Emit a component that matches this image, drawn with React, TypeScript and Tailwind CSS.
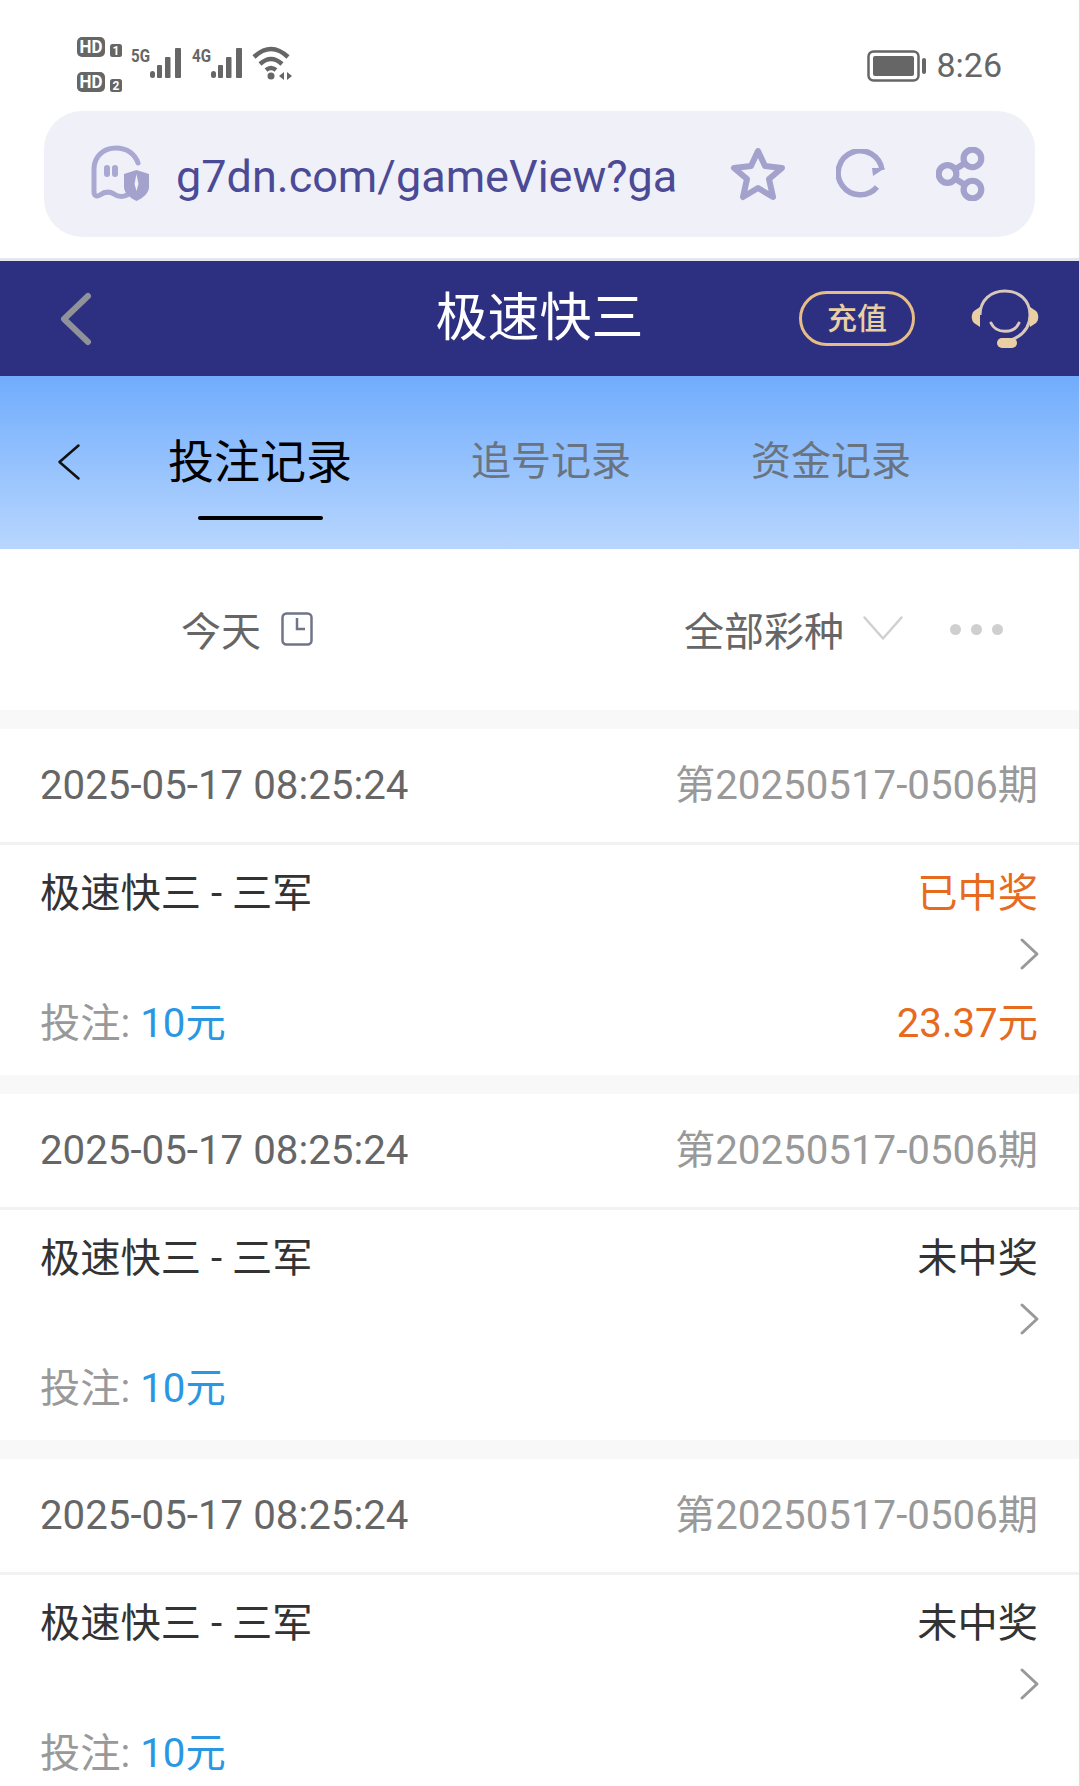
const fontStack = "font-['Roboto','Noto_Sans_CJK_SC',sans-serif]";

function StatusIcons() {
  return (
    <svg width="224" height="64" viewBox="0 0 224 64" fill="#666">
      <rect x="2" y="1" width="28" height="20" rx="5" />
      <text x="16" y="17" fill="#fff" fontSize="18" fontWeight="700" textAnchor="middle" textLength="23" lengthAdjust="spacingAndGlyphs" fontFamily="Roboto">HD</text>
      <rect x="35" y="8" width="12" height="13" rx="2.5" />
      <text x="41" y="19" fill="#fff" fontSize="12" fontWeight="700" textAnchor="middle" fontFamily="Roboto">1</text>
      <rect x="2" y="36" width="28" height="20" rx="5" />
      <text x="16" y="52" fill="#fff" fontSize="18" fontWeight="700" textAnchor="middle" textLength="23" lengthAdjust="spacingAndGlyphs" fontFamily="Roboto">HD</text>
      <rect x="35" y="43" width="12" height="13" rx="2.5" />
      <text x="41" y="54" fill="#fff" fontSize="12" fontWeight="700" textAnchor="middle" fontFamily="Roboto">2</text>

      <text x="56" y="26" fontSize="19" fontWeight="700" textLength="19" lengthAdjust="spacingAndGlyphs" fontFamily="Roboto">5G</text>
      <rect x="75" y="35" width="5" height="7" rx="2.5" />
      <rect x="82" y="29" width="5" height="13" rx="1" />
      <rect x="90" y="21" width="5.5" height="21" rx="1" />
      <rect x="100" y="12" width="6" height="30" rx="1" />

      <text x="117" y="26" fontSize="19" fontWeight="700" textLength="19" lengthAdjust="spacingAndGlyphs" fontFamily="Roboto">4G</text>
      <rect x="136" y="35" width="5" height="7" rx="2.5" />
      <rect x="143" y="29" width="5" height="13" rx="1" />
      <rect x="151" y="21" width="5.5" height="21" rx="1" />
      <rect x="161" y="12" width="6" height="30" rx="1" />

      <g fill="none" stroke="#666" strokeWidth="4.5">
        <path d="M179 21 Q196 5 213 21" />
        <path d="M185 28 Q196 18 207 28" />
        <path d="M191 34 Q196 30 201 34" />
      </g>
      <circle cx="196" cy="40" r="3.5" />
      <path d="M209 36v8l-5-4zM212 36v8l5-4z" />
    </svg>
  );
}

function Battery() {
  return (
    <svg width="60" height="32" viewBox="0 0 60 32">
      <rect x="1.5" y="1.5" width="50" height="29" rx="5" fill="none" stroke="#666" strokeWidth="2.5" />
      <rect x="6" y="6" width="41" height="20" rx="2" fill="#666" />
      <rect x="55" y="8" width="4" height="16" rx="2" fill="#666" />
    </svg>
  );
}

function GhostIcon() {
  return (
    <svg width="62" height="58" viewBox="0 0 62 58" fill="none">
      <path
        d="M5 47 V24 C5 11 15 3 27 3 C38 3 46 9 49 18 M5 47 C5 51 8 52 11 50 C15 47 20 46 25 49 C29 52 34 52 38 50"
        stroke="#a9a8d2"
        strokeWidth="5"
        strokeLinecap="round"
      />
      <rect x="15" y="20" width="6" height="12" rx="3" fill="#a9a8d2" />
      <rect x="23" y="20" width="6" height="12" rx="3" fill="#a9a8d2" />
      <path d="M47.5 25 L60 29 V42 C60 48 54 53 47.5 56 C41 53 35 48 35 42 V29 Z" fill="#a3a2cc" />
      <path d="M47.5 29 L49.5 39 L47.5 46 L45.5 39 Z" fill="#f0f0f8" />
    </svg>
  );
}

function StarIcon() {
  return (
    <svg width="56" height="54" viewBox="0 0 56 54" fill="none">
      <path
        d="M28 4 L35 19 L52 21 L39 32 L43 50 L28 41 L13 50 L17 32 L4 21 L21 19 Z"
        stroke="#a3a2cc"
        strokeWidth="6"
        strokeLinejoin="round"
      />
    </svg>
  );
}

function ReloadIcon() {
  return (
    <svg width="50" height="50" viewBox="0 0 50 50" fill="none">
      <path d="M41 38 A22 22 0 1 1 46 21" stroke="#a3a2cc" strokeWidth="5.5" />
      <path d="M49 19 L37 27 L36 19 Z" fill="#a3a2cc" />
    </svg>
  );
}

function ShareIcon() {
  return (
    <svg width="50" height="54" viewBox="0 0 48 52" fill="none" stroke="#a3a2cc" strokeWidth="6">
      <circle cx="35" cy="11" r="8.5" />
      <circle cx="11" cy="26" r="8.5" />
      <circle cx="35" cy="41" r="8.5" />
      <path d="M19 21 L27 16 M19 31 L27 36" />
    </svg>
  );
}

function Headset() {
  return (
    <svg width="68" height="60" viewBox="0 0 68 60" fill="none">
      <path d="M9 26 C9 11 20 2 34 2 C48 2 59 11 59 26 C59 38 52 47 38 52" stroke="#d8c8bc" strokeWidth="3" />
      <path d="M3 22 C0 25 0 31 3 34 L9 38 V18 Z" fill="#e9cfa3" />
      <path d="M65 22 C68 25 68 31 65 34 L59 38 V18 Z" fill="#e9cfa3" />
      <path d="M20 34 C25 45 43 45 48 34" stroke="#dcc8c0" strokeWidth="3" strokeLinecap="round" />
      <rect x="26" y="49" width="20" height="10" rx="5" fill="#e9cfa3" />
    </svg>
  );
}

function Chevron({ w, h, color, stroke, dir }: { w: number; h: number; color: string; stroke: number; dir: "left" | "right" | "down" }) {
  const d =
    dir === "left"
      ? `M${w - stroke} ${stroke} L${stroke} ${h / 2} L${w - stroke} ${h - stroke}`
      : dir === "right"
        ? `M${stroke} ${stroke} L${w - stroke} ${h / 2} L${stroke} ${h - stroke}`
        : `M${stroke} ${stroke} L${w / 2} ${h - stroke} L${w - stroke} ${stroke}`;
  return (
    <svg width={w} height={h} viewBox={`0 0 ${w} ${h}`} fill="none">
      <path d={d} stroke={color} strokeWidth={stroke} strokeLinecap="round" strokeLinejoin="round" />
    </svg>
  );
}

function ClockIcon() {
  return (
    <svg width="32" height="34" viewBox="0 0 32 34" fill="none" stroke="#6f7488" strokeWidth="2.5">
      <rect x="1.5" y="1.5" width="29" height="31" rx="4" />
      <path d="M16 6 V17 H24" />
    </svg>
  );
}

function RecordCard({ status, win }: { status: string; win?: string }) {
  return (
    <div className="bg-white">
      <div className="flex h-[113px] items-center justify-between pt-[2px] pr-[41px] pl-[40px]">
        <span className="text-[40.25px] text-[#666]">2025-05-17 08:25:24</span>
        <span className="text-[40.25px] text-[#999]">第20250517-0506期</span>
      </div>
      <div className="h-[3px] bg-[#f2f2f2]" />
      <div className="flex h-[230px] justify-between pt-[21px] pr-[41px] pb-[23px] pl-[40px]">
        <div className="flex flex-col justify-between">
          <div className="h-[56px] text-[40.25px] leading-[56px] text-[#333]">极速快三 - 三军</div>
          <div className="h-[56px] text-[40.25px] leading-[56px] text-[#999]">
            投注: <span className="text-[#2b97e3]">10元</span>
          </div>
        </div>
        <div className="flex flex-col items-end justify-between">
          <div className={`h-[56px] text-[40.25px] leading-[56px] ${win ? "text-[#e66b1f]" : "text-[#333]"}`}>{status}</div>
          <div className="mr-[-2px] mb-[10px]">
            <Chevron w={21} h={34} color="#999" stroke={3} dir="right" />
          </div>
          <div className="h-[56px] text-[40.25px] leading-[56px] text-[#e66b1f]">{win}</div>
        </div>
      </div>
    </div>
  );
}

export default function App() {
  return (
    <div className={`h-[1786px] w-[1080px] overflow-hidden border-r border-[#dcdcdc] bg-white ${fontStack}`}>
      {/* status bar */}
      <div className="flex h-[111px] items-center justify-between pt-[20px] pr-[77px] pl-[75px]">
        <div className="mt-[4px]">
          <StatusIcons />
        </div>
        <div className="flex items-center gap-[9px]">
          <Battery />
          <span className="text-[34px] text-[#666]">8:26</span>
        </div>
      </div>

      {/* url bar */}
      <div className="mr-[44px] ml-[44px] flex h-[126px] items-center rounded-[38px] bg-[#f0f0f8] pl-[45px]">
        <GhostIcon />
        <span className="mt-[6px] ml-[25px] w-[507px] overflow-hidden text-[45px] whitespace-nowrap text-[#4b4a96]">
          g7dn.com/gameView?ga
        </span>
        <div className="ml-[47px]">
          <StarIcon />
        </div>
        <div className="ml-[50px]">
          <ReloadIcon />
        </div>
        <div className="ml-[50px]">
          <ShareIcon />
        </div>
      </div>
      <div className="h-[24px] border-b-[3px] border-[#e4e8ee]" />

      {/* header */}
      <div className="flex h-[115px] items-center bg-[#2d3080] px-[40px]">
        <div className="flex flex-1">
          <div className="ml-[18px]">
            <Chevron w={36} h={58} color="#8f9399" stroke={6} dir="left" />
          </div>
        </div>
        <h1 className="text-[52px] text-white">极速快三</h1>
        <div className="flex flex-1 items-center justify-end gap-[56px]">
          <div className="flex h-[55px] w-[116px] items-center justify-center rounded-full border-[3px] border-[#e6bd86] text-[30px] font-medium text-[#e9cfa3]">
            充值
          </div>
          <Headset />
        </div>
      </div>

      {/* tabs */}
      <div className="flex h-[173px] items-start bg-gradient-to-b from-[#70acfc] to-[#b8d6fe] pt-[59px]">
        <div className="mt-[8px] ml-[57px] w-[111px]">
          <Chevron w={24} h={38} color="#111" stroke={2.5} dir="left" />
        </div>
        <div className="flex w-[184px] flex-col items-center">
          <span className="text-[46px] leading-[54px] whitespace-nowrap text-black">投注记录</span>
          <div className="mt-[27px] h-[4px] w-[125px] rounded-full bg-black" />
        </div>
        <span className="ml-[119px] text-[40px] leading-[54px] whitespace-nowrap text-[#6a7480]">追号记录</span>
        <span className="ml-[120px] text-[40px] leading-[54px] whitespace-nowrap text-[#6a7480]">资金记录</span>
      </div>

      {/* filter row */}
      <div className="flex h-[161px] items-center pl-[181px]">
        <span className="mt-[6px] text-[40px] text-[#666]">今天</span>
        <div className="mb-[2px] ml-[20px]">
          <ClockIcon />
        </div>
        <span className="mt-[6px] ml-[371px] text-[40px] text-[#666]">全部彩种</span>
        <div className="mb-[3px] ml-[18px]">
          <Chevron w={42} h={26} color="#d0d0d0" stroke={2.5} dir="down" />
        </div>
        <div className="ml-[46px] flex gap-[10px]">
          <div className="h-[11px] w-[11px] rounded-full bg-[#cfcfcf]" />
          <div className="h-[11px] w-[11px] rounded-full bg-[#cfcfcf]" />
          <div className="h-[11px] w-[11px] rounded-full bg-[#cfcfcf]" />
        </div>
      </div>

      {/* records */}
      <div className="flex flex-col gap-[19px] bg-[#f8f8f8] pt-[19px]">
        <RecordCard status="已中奖" win="23.37元" />
        <RecordCard status="未中奖" />
        <RecordCard status="未中奖" />
      </div>
    </div>
  );
}
